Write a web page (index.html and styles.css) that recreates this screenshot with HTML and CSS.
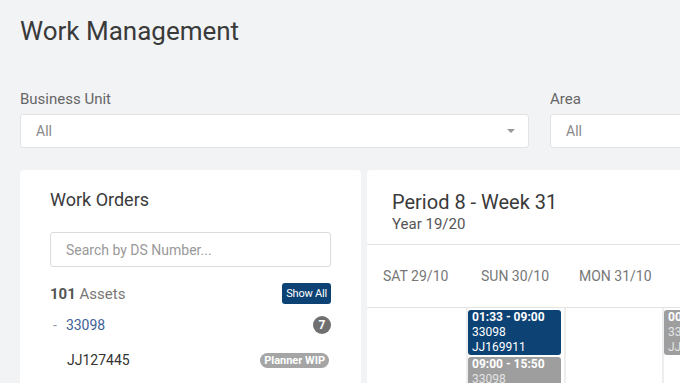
FILE: index.html
```html
<!DOCTYPE html>
<html lang="en">
<head>
    <meta charset="UTF-8">
    <meta name="viewport" content="width=device-width, initial-scale=1.0">
    <title>Work Management</title>
    <link rel="stylesheet" href="styles.css">
</head>
<body>

    <div class="page">
        <h1 class="page-title">Work Management</h1>

        <div class="filters">
            <div class="filter">
                <label class="filter-label">Business Unit</label>
                <div class="select-box">
                    <span>All</span>
                    <span class="caret"></span>
                </div>
            </div>
            <div class="filter">
                <label class="filter-label">Area</label>
                <div class="select-box">
                    <span>All</span>
                    <span class="caret"></span>
                </div>
            </div>
        </div>

        <div class="panels">
            <div class="card orders-card">
                <h2 class="card-title">Work Orders</h2>
                <input type="text" class="search-input" placeholder="Search by DS Number...">

                <div class="assets-row">
                    <span class="assets-count"><b>101</b> Assets</span>
                    <button class="show-all-btn">Show All</button>
                </div>

                <div class="asset-row">
                    <span class="asset-name"><span class="dash">-</span><a href="#">33098</a></span>
                    <span class="count-badge">7</span>
                </div>
                <div class="asset-row sub-row">
                    <span class="order-name">JJ127445</span>
                    <span class="status-badge">Planner WIP</span>
                </div>
            </div>

            <div class="card calendar-card">
                <div class="calendar-head">
                    <h2 class="period-title">Period 8 - Week 31</h2>
                    <div class="period-year">Year 19/20</div>
                </div>

                <div class="day-headers">
                    <div class="day-cell">SAT 29/10</div>
                    <div class="day-cell">SUN 30/10</div>
                    <div class="day-cell">MON 31/10</div>
                    <div class="day-cell"></div>
                </div>

                <div class="day-columns">
                    <div class="day-col"></div>
                    <div class="day-col">
                        <div class="event event-blue">
                            <b>01:33 - 09:00</b>
                            <span>33098</span>
                            <span>JJ169911</span>
                        </div>
                        <div class="event event-grey">
                            <b>09:00 - 15:50</b>
                            <span>33098</span>
                        </div>
                    </div>
                    <div class="day-col"></div>
                    <div class="day-col">
                        <div class="event event-grey">
                            <b>00</b>
                            <span>33</span>
                            <span>JJ</span>
                        </div>
                    </div>
                </div>
            </div>
        </div>
    </div>

</body>
</html>
```

FILE: styles.css
```css
        /* Work management page */
        body {
            font-family: Roboto, "Liberation Sans", Arial, sans-serif;
            background-color: #f2f3f5;
            margin: 0;
            overflow: hidden;
            color: #333;
        }
        .page {
            padding: 0 20px;
            width: 1100px;
        }
        .page-title {
            font-size: 26px;
            font-weight: 400;
            color: #3a3a3a;
            margin: 0;
            padding-top: 16px;
            height: 74px;
        }

        .filters {
            display: grid;
            grid-template-columns: 509px 509px;
            column-gap: 21px;
        }
        .filter-label {
            display: block;
            font-size: 15px;
            color: #666;
            height: 24px;
        }
        .select-box {
            display: flex;
            justify-content: space-between;
            align-items: center;
            height: 32px;
            padding: 0 13px 0 15px;
            background-color: #fff;
            border: 1px solid #e2e3e5;
            border-radius: 3px;
            font-size: 14px;
            color: #888;
        }
        .caret {
            width: 0;
            height: 0;
            border-left: 4px solid transparent;
            border-right: 4px solid transparent;
            border-top: 4px solid #999;
        }

        .panels {
            display: flex;
            gap: 6px;
            margin-top: 22px;
        }
        .card {
            background-color: #fff;
            border-radius: 4px;
            height: 300px;
        }

        .orders-card {
            width: 341px;
            padding: 0 30px;
            box-sizing: border-box;
            flex-shrink: 0;
        }
        .card-title {
            font-size: 18px;
            font-weight: 400;
            color: #3a3a3a;
            margin: 0;
            padding-top: 19px;
            height: 43px;
        }
        .search-input {
            display: block;
            width: 100%;
            box-sizing: border-box;
            height: 35px;
            padding: 0 15px;
            border: 1px solid #dcdcdc;
            border-radius: 3px;
            font-family: inherit;
            font-size: 14px;
        }
        .search-input::placeholder {
            color: #999;
        }
        .assets-row,
        .asset-row {
            display: flex;
            justify-content: space-between;
            align-items: center;
        }
        .assets-row {
            margin-top: 16px;
            height: 21px;
        }
        .assets-count {
            font-size: 15px;
            color: #777;
        }
        .assets-count b {
            color: #555;
        }
        .show-all-btn {
            background-color: #0c4274;
            color: #fff;
            border: none;
            border-radius: 3px;
            font-family: inherit;
            font-size: 11px;
            letter-spacing: -0.2px;
            padding: 0 4px;
            height: 21px;
        }
        .asset-row {
            height: 34px;
            margin-top: 4px;
            font-size: 14px;
        }
        .asset-row + .asset-row {
            margin-top: 1px;
        }
        .dash {
            color: #8a9ab5;
            margin: 0 9px 0 3px;
        }
        .asset-name a {
            color: #3d5f96;
            text-decoration: none;
        }
        .count-badge {
            width: 18px;
            height: 18px;
            border-radius: 50%;
            background-color: #707070;
            color: #fff;
            font-size: 12px;
            font-weight: 700;
            display: flex;
            align-items: center;
            justify-content: center;
        }
        .sub-row {
            padding-left: 17px;
            padding-right: 2px;
        }
        .order-name {
            color: #333;
        }
        .status-badge {
            background-color: #a5a5a5;
            color: #fff;
            font-size: 11px;
            font-weight: 700;
            padding: 1px 4px;
            border-radius: 8px;
        }

        .calendar-card {
            flex: 1;
        }
        .calendar-head {
            padding: 19px 25px 0;
            height: 55px;
            border-bottom: 1px solid #e3e3e3;
        }
        .period-title {
            font-size: 20px;
            font-weight: 400;
            color: #3a3a3a;
            margin: 0;
            line-height: 26px;
        }
        .period-year {
            font-size: 15px;
            color: #555;
            line-height: 18px;
        }
        .day-headers,
        .day-columns {
            display: flex;
            padding-left: 1px;
        }
        .day-headers {
            height: 62px;
            border-bottom: 1px solid #e3e3e3;
        }
        .day-cell {
            width: 98px;
            padding-left: 15px;
            box-sizing: border-box;
            font-size: 14px;
            color: #777;
            display: flex;
            align-items: center;
        }
        .day-col {
            width: 98px;
            height: 80px;
            box-sizing: border-box;
            border-left: 2px solid #eee;
            padding: 2px 3px 0 0;
        }
        .day-col:first-child {
            border-left: none;
        }
        .event {
            display: flex;
            flex-direction: column;
            border-radius: 3px;
            padding: 0 4px;
            margin-bottom: 2px;
            font-size: 12px;
            line-height: 15px;
            color: #fff;
        }
        .event-blue {
            background-color: #0c4274;
        }
        .event-grey {
            background-color: #9e9e9e;
        }
        .event-grey span {
            color: #e4e4e4;
        }
```
